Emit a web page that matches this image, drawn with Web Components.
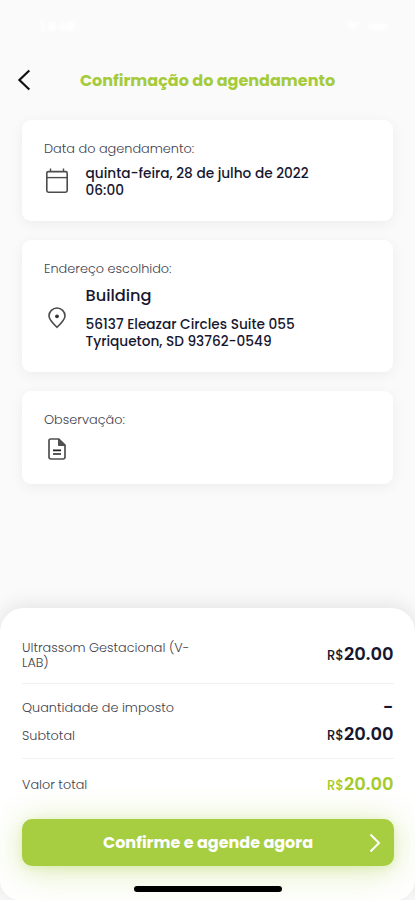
<!DOCTYPE html>
<html lang="pt-BR">
<head>
<meta charset="utf-8">
<title>Confirmação do agendamento</title>
<style>
html,body{margin:0;padding:0;background:#fafafa}
body{width:415px;height:900px;overflow:hidden;font-family:Poppins,Inter,sans-serif;color:#17172f}
</style>
</head>
<body>
<booking-screen></booking-screen>
<script>
function define(name, html) {
  const t = document.createElement('template');
  t.innerHTML = html;
  customElements.define(name, class extends HTMLElement {
    constructor() {
      super();
      this.attachShadow({mode: 'open'}).append(t.content.cloneNode(true));
    }
  });
}

define('status-bar', `
<style>:host{display:flex;justify-content:space-between;height:56px;box-sizing:border-box;padding:18px 18px 0 38px}svg{display:block;filter:blur(1.5px);opacity:.85}</style>
<svg width="42" height="16" fill="#fff"><rect x="3" y="3" width="3" height="11"/><rect x="10" y="4" width="8" height="9" rx="3"/><rect x="22" y="4" width="6" height="9" rx="3"/><rect x="29" y="3" width="8" height="10" rx="3"/></svg>
<svg width="54" height="16" fill="#fff"><path d="M3 4h14l-4 7H7zM23 6h24l-6 6H28z"/></svg>`);

define('page-header', `
<style>
:host{display:grid;grid-template-columns:48px 1fr 48px;align-items:center;height:48px}
svg{display:block;margin-left:16.500px}
h1{margin:2px 0 0;text-align:center;font-size:16px;line-height:24px;font-weight:700;color:#a5cb3b;white-space:nowrap}
</style>
<svg width="14" height="22" fill="none" stroke="#111" stroke-width="2.2"><path d="M12.300 1.500 2.400 11l9.900 9.500"/></svg>
<h1><slot></slot></h1>`);

define('info-card', `
<style>
:host{display:block;box-sizing:border-box;background:#fff;border-radius:9px;box-shadow:0 3px 14px rgba(0,0,0,.055);padding:19px 22px 0}
.label{font-size:12.850px;line-height:20px;font-weight:300;color:#41414d;white-space:nowrap}
.row{display:grid;grid-template-columns:26px 1fr;column-gap:15.500px;margin-top:5px}
.icon{display:flex;justify-content:center;align-self:start;margin-top:var(--icon-top,4px)}
.body{padding-top:var(--body-top,0)}
</style>
<div class="label"><slot name="label"></slot></div>
<div class="row"><div class="icon"><slot name="icon"></slot></div><div class="body"><slot></slot></div></div>`);

define('calendar-icon', `
<style>:host{display:block}svg{display:block}</style>
<svg width="24" height="26" fill="none" stroke="#4c4c4c"><rect x="1.800" y="3.600" width="20.400" height="20.600" rx="1.600" stroke-width="1.600"/><path d="M2 9.600h20" stroke-width="1.400"/><path d="M5.500 .5v3.500M18.500 .5v3.500" stroke-width="1.400"/></svg>`);
define('pin-icon', `
<style>:host{display:block}svg{display:block}</style>
<svg width="20" height="22" fill="none" stroke="#4a4a4a" stroke-width="1.600"><path d="M10 20.300C6 16.400 2 12.600 2 8.900a8 7.900 0 0 1 16 0c0 3.700-4 7.500-8 11.400z"/><circle cx="10" cy="9.300" r="1.900" fill="#333" stroke="none"/></svg>`);
define('note-icon', `
<style>:host{display:block}svg{display:block}</style>
<svg width="20" height="24" fill="none" stroke="#505050" stroke-width="1.700"><path d="M3.600 2h8.200l6.200 6.200v12a1.800 1.800 0 0 1-1.800 1.800H3.800A1.800 1.800 0 0 1 2 20.200V3.600A1.600 1.600 0 0 1 3.600 2z"/><path d="M11.500 2v6.500H18z" fill="#505050" stroke-width="1"/><path d="M6 13.300h8M6 17h8" stroke="#222"/></svg>`);

define('text-line', `
<style>:host{display:block;white-space:nowrap;font-size:13.680px;line-height:17px;font-weight:500}:host([big]){font-size:16.200px;line-height:24px;margin-bottom:8.500px}</style><slot></slot>`);

define('price-value', `
<style>
:host{display:flex;justify-content:flex-end;align-items:baseline;font-size:17.900px;line-height:24px;font-weight:600;margin-right:.5px}
small{font-size:13.200px;font-weight:500}
</style><small><slot name="currency"></slot></small><span><slot></slot></span>`);

define('price-row', `
<style>
:host{display:flex;justify-content:space-between;align-items:center;box-sizing:border-box}
.label{font-size:12.800px;line-height:15px;font-weight:300;color:#41414d;white-space:nowrap}
</style><div class="label"><slot></slot></div><slot name="value"></slot>`);

define('confirm-button', `
<style>
:host{display:block}
button{all:unset;box-sizing:border-box;display:grid;grid-template-columns:52px 1fr 52px;align-items:center;width:100%;height:47px;border-radius:10px;background:#a6ce40;box-shadow:0 4px 34px rgba(166,206,64,.42),0 2px 8px rgba(166,206,64,.2)}
span{grid-column:2;text-align:center;color:#fff;font-size:16px;line-height:24px;font-weight:700;white-space:nowrap}
svg{justify-self:end;margin-right:13px}
</style>
<button><span><slot></slot></span><svg width="12" height="20" fill="none" stroke="#fff" stroke-width="2"><path d="M1.500 1.500 10 10l-8.500 8.500"/></svg></button>`);

define('summary-sheet', `
<style>
:host{display:flex;flex-direction:column;position:relative;box-sizing:border-box;height:292px;background:#fff;border-radius:24px 24px 20px 20px;box-shadow:0 -2px 20px rgba(0,0,0,.1);padding:0 21px 0 22px;overflow:hidden}
hr{border:0;height:1px;background:#f1f1f1;margin:0;flex:none}
.bar{width:148px;height:6px;border-radius:3px;background:#000;margin:20px auto 0}
</style>
<price-row style="height:75px;padding-top:18px">Ultrassom Gestacional (V-<br>LAB)<price-value slot="value"><span slot="currency">R$</span>20.00</price-value></price-row>
<hr>
<price-row style="height:30px;margin-top:8px">Quantidade de imposto<price-value slot="value">-</price-value></price-row>
<price-row style="height:26px">Subtotal<price-value slot="value"><span slot="currency">R$</span>20.00</price-value></price-row>
<hr style="margin-top:10px">
<price-row style="height:51px">Valor total<price-value slot="value" style="color:#a5cb2b"><span slot="currency">R$</span>20.00</price-value></price-row>
<confirm-button style="margin-top:9px">Confirme e agende agora</confirm-button>
<div class="bar"></div>`);

define('booking-screen', `
<style>
:host{display:flex;flex-direction:column;width:415px;height:900px;background:#fafafa;overflow:hidden}
main{display:flex;flex-direction:column;gap:18.500px;padding:16px 22px 0;flex:1}
</style>
<status-bar></status-bar>
<page-header>Confirmação do agendamento</page-header>
<main>
<info-card style="height:101px;--body-top:1px"><span slot="label">Data do agendamento:</span><calendar-icon slot="icon"></calendar-icon>
<text-line>quinta-feira, 28 de julho de 2022</text-line><text-line>06:00</text-line></info-card>
<info-card style="height:132.500px;--icon-top:23px"><span slot="label">Endereço escolhido:</span><pin-icon slot="icon"></pin-icon>
<text-line big>Building</text-line><text-line>56137 Eleazar Circles Suite 055</text-line><text-line>Tyriqueton, SD 93762-0549</text-line></info-card>
<info-card style="height:93px;--icon-top:2px"><span slot="label">Observação:</span><note-icon slot="icon"></note-icon></info-card>
</main>
<summary-sheet></summary-sheet>`);
</script>
</body>
</html>
